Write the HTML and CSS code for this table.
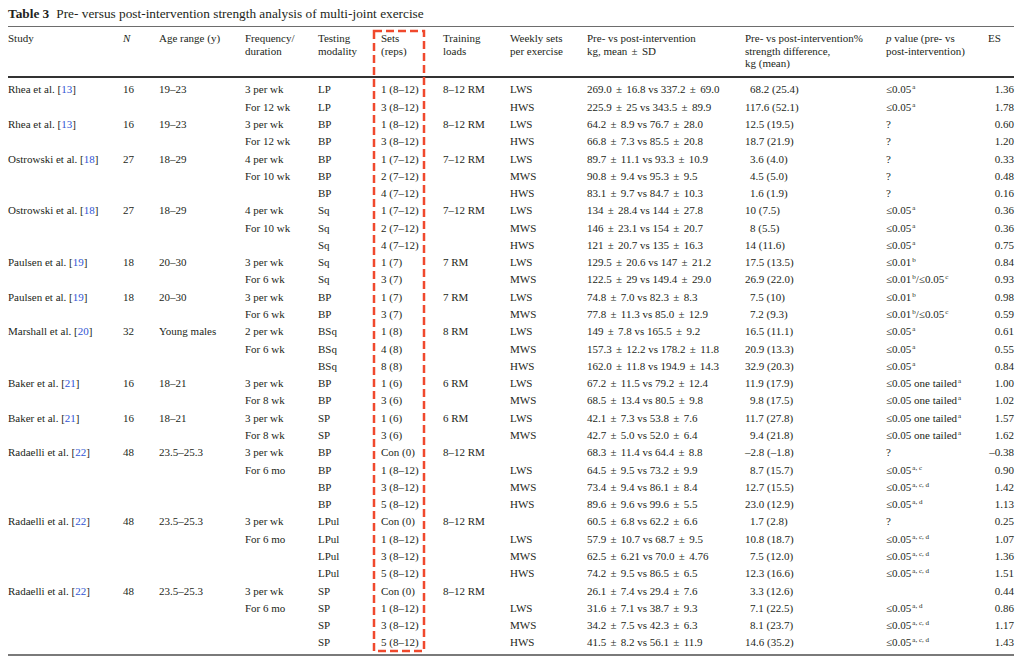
FILE: index.html
```html
<!DOCTYPE html>
<html lang="en">
<head>
<meta charset="utf-8">
<title>Table 3</title>
<link rel="stylesheet" href="styles.css">
</head>
<body>
<div class="page">
  <div class="caption"><b>Table 3</b><span class="ctext">Pre- versus post-intervention strength analysis of multi-joint exercise</span></div>
  <div class="wrap">
    <table class="data">
      <colgroup>
        <col class="c-study"><col class="c-n"><col class="c-age"><col class="c-freq"><col class="c-mod"><col class="c-sets"><col class="c-load"><col class="c-week"><col class="c-pp"><col class="c-pct"><col class="c-p"><col class="c-es">
      </colgroup>
      <thead>
        <tr>
          <th>Study</th>
          <th><i>N</i></th>
          <th>Age range (y)</th>
          <th>Frequency/<br>duration</th>
          <th>Testing<br>modality</th>
          <th class="sets">Sets<br>(reps)</th>
          <th>Training<br>loads</th>
          <th>Weekly sets<br>per exercise</th>
          <th>Pre- vs post-intervention<br>kg, mean <span class="pm">±</span> SD</th>
          <th>Pre- vs post-intervention%<br>strength difference,<br>kg (mean)</th>
          <th><i>p</i> value (pre- vs<br>post-intervention)</th>
          <th>ES</th>
        </tr>
      </thead>
      <tbody>
        <tr><td>Rhea et al. [<a>13</a>]</td><td>16</td><td>19–23</td><td>3 per wk</td><td>LP</td><td class="sets">1 (8–12)</td><td>8–12 RM</td><td>LWS</td><td>269.0 <span class="pm">±</span> 16.8 vs 337.2 <span class="pm">±</span> 69.0</td><td><span class="ind">68.2 (25.4)</span></td><td>≤0.05<sup>a</sup></td><td class="es">1.36</td></tr>
        <tr><td></td><td></td><td></td><td>For 12 wk</td><td>LP</td><td class="sets">3 (8–12)</td><td></td><td>HWS</td><td>225.9 <span class="pm">±</span> 25 vs 343.5 <span class="pm">±</span> 89.9</td><td>117.6 (52.1)</td><td>≤0.05<sup>a</sup></td><td class="es">1.78</td></tr>
        <tr><td>Rhea et al. [<a>13</a>]</td><td>16</td><td>19–23</td><td>3 per wk</td><td>BP</td><td class="sets">1 (8–12)</td><td>8–12 RM</td><td>LWS</td><td>64.2 <span class="pm">±</span> 8.9 vs 76.7 <span class="pm">±</span> 28.0</td><td>12.5 (19.5)</td><td>?</td><td class="es">0.60</td></tr>
        <tr><td></td><td></td><td></td><td>For 12 wk</td><td>BP</td><td class="sets">3 (8–12)</td><td></td><td>HWS</td><td>66.8 <span class="pm">±</span> 7.3 vs 85.5 <span class="pm">±</span> 20.8</td><td>18.7 (21.9)</td><td>?</td><td class="es">1.20</td></tr>
        <tr><td>Ostrowski et al. [<a>18</a>]</td><td>27</td><td>18–29</td><td>4 per wk</td><td>BP</td><td class="sets">1 (7–12)</td><td>7–12 RM</td><td>LWS</td><td>89.7 <span class="pm">±</span> 11.1 vs 93.3 <span class="pm">±</span> 10.9</td><td><span class="ind">3.6 (4.0)</span></td><td>?</td><td class="es">0.33</td></tr>
        <tr><td></td><td></td><td></td><td>For 10 wk</td><td>BP</td><td class="sets">2 (7–12)</td><td></td><td>MWS</td><td>90.8 <span class="pm">±</span> 9.4 vs 95.3 <span class="pm">±</span> 9.5</td><td><span class="ind">4.5 (5.0)</span></td><td>?</td><td class="es">0.48</td></tr>
        <tr><td></td><td></td><td></td><td></td><td>BP</td><td class="sets">4 (7–12)</td><td></td><td>HWS</td><td>83.1 <span class="pm">±</span> 9.7 vs 84.7 <span class="pm">±</span> 10.3</td><td><span class="ind">1.6 (1.9)</span></td><td>?</td><td class="es">0.16</td></tr>
        <tr><td>Ostrowski et al. [<a>18</a>]</td><td>27</td><td>18–29</td><td>4 per wk</td><td>Sq</td><td class="sets">1 (7–12)</td><td>7–12 RM</td><td>LWS</td><td>134 <span class="pm">±</span> 28.4 vs 144 <span class="pm">±</span> 27.8</td><td>10 (7.5)</td><td>≤0.05<sup>a</sup></td><td class="es">0.36</td></tr>
        <tr><td></td><td></td><td></td><td>For 10 wk</td><td>Sq</td><td class="sets">2 (7–12)</td><td></td><td>MWS</td><td>146 <span class="pm">±</span> 23.1 vs 154 <span class="pm">±</span> 20.7</td><td><span class="ind">8 (5.5)</span></td><td>≤0.05<sup>a</sup></td><td class="es">0.36</td></tr>
        <tr><td></td><td></td><td></td><td></td><td>Sq</td><td class="sets">4 (7–12)</td><td></td><td>HWS</td><td>121 <span class="pm">±</span> 20.7 vs 135 <span class="pm">±</span> 16.3</td><td>14 (11.6)</td><td>≤0.05<sup>a</sup></td><td class="es">0.75</td></tr>
        <tr><td>Paulsen et al. [<a>19</a>]</td><td>18</td><td>20–30</td><td>3 per wk</td><td>Sq</td><td class="sets">1 (7)</td><td>7 RM</td><td>LWS</td><td>129.5 <span class="pm">±</span> 20.6 vs 147 <span class="pm">±</span> 21.2</td><td>17.5 (13.5)</td><td>≤0.01<sup>b</sup></td><td class="es">0.84</td></tr>
        <tr><td></td><td></td><td></td><td>For 6 wk</td><td>Sq</td><td class="sets">3 (7)</td><td></td><td>MWS</td><td>122.5 <span class="pm">±</span> 29 vs 149.4 <span class="pm">±</span> 29.0</td><td>26.9 (22.0)</td><td>≤0.01<sup>b</sup>/≤0.05<sup>c</sup></td><td class="es">0.93</td></tr>
        <tr><td>Paulsen et al. [<a>19</a>]</td><td>18</td><td>20–30</td><td>3 per wk</td><td>BP</td><td class="sets">1 (7)</td><td>7 RM</td><td>LWS</td><td>74.8 <span class="pm">±</span> 7.0 vs 82.3 <span class="pm">±</span> 8.3</td><td><span class="ind">7.5 (10)</span></td><td>≤0.01<sup>b</sup></td><td class="es">0.98</td></tr>
        <tr><td></td><td></td><td></td><td>For 6 wk</td><td>BP</td><td class="sets">3 (7)</td><td></td><td>MWS</td><td>77.8 <span class="pm">±</span> 11.3 vs 85.0 <span class="pm">±</span> 12.9</td><td><span class="ind">7.2 (9.3)</span></td><td>≤0.01<sup>b</sup>/≤0.05<sup>c</sup></td><td class="es">0.59</td></tr>
        <tr><td>Marshall et al. [<a>20</a>]</td><td>32</td><td>Young males</td><td>2 per wk</td><td>BSq</td><td class="sets">1 (8)</td><td>8 RM</td><td>LWS</td><td>149 <span class="pm">±</span> 7.8 vs 165.5 <span class="pm">±</span> 9.2</td><td>16.5 (11.1)</td><td>≤0.05<sup>a</sup></td><td class="es">0.61</td></tr>
        <tr><td></td><td></td><td></td><td>For 6 wk</td><td>BSq</td><td class="sets">4 (8)</td><td></td><td>MWS</td><td>157.3 <span class="pm">±</span> 12.2 vs 178.2 <span class="pm">±</span> 11.8</td><td>20.9 (13.3)</td><td>≤0.05<sup>a</sup></td><td class="es">0.55</td></tr>
        <tr><td></td><td></td><td></td><td></td><td>BSq</td><td class="sets">8 (8)</td><td></td><td>HWS</td><td>162.0 <span class="pm">±</span> 11.8 vs 194.9 <span class="pm">±</span> 14.3</td><td>32.9 (20.3)</td><td>≤0.05<sup>a</sup></td><td class="es">0.84</td></tr>
        <tr><td>Baker et al. [<a>21</a>]</td><td>16</td><td>18–21</td><td>3 per wk</td><td>BP</td><td class="sets">1 (6)</td><td>6 RM</td><td>LWS</td><td>67.2 <span class="pm">±</span> 11.5 vs 79.2 <span class="pm">±</span> 12.4</td><td>11.9 (17.9)</td><td>≤0.05 one tailed<sup>a</sup></td><td class="es">1.00</td></tr>
        <tr><td></td><td></td><td></td><td>For 8 wk</td><td>BP</td><td class="sets">3 (6)</td><td></td><td>MWS</td><td>68.5 <span class="pm">±</span> 13.4 vs 80.5 <span class="pm">±</span> 9.8</td><td><span class="ind">9.8 (17.5)</span></td><td>≤0.05 one tailed<sup>a</sup></td><td class="es">1.02</td></tr>
        <tr><td>Baker et al. [<a>21</a>]</td><td>16</td><td>18–21</td><td>3 per wk</td><td>SP</td><td class="sets">1 (6)</td><td>6 RM</td><td>LWS</td><td>42.1 <span class="pm">±</span> 7.3 vs 53.8 <span class="pm">±</span> 7.6</td><td>11.7 (27.8)</td><td>≤0.05 one tailed<sup>a</sup></td><td class="es">1.57</td></tr>
        <tr><td></td><td></td><td></td><td>For 8 wk</td><td>SP</td><td class="sets">3 (6)</td><td></td><td>MWS</td><td>42.7 <span class="pm">±</span> 5.0 vs 52.0 <span class="pm">±</span> 6.4</td><td><span class="ind">9.4 (21.8)</span></td><td>≤0.05 one tailed<sup>a</sup></td><td class="es">1.62</td></tr>
        <tr><td>Radaelli et al. [<a>22</a>]</td><td>48</td><td>23.5–25.3</td><td>3 per wk</td><td>BP</td><td class="sets">Con (0)</td><td>8–12 RM</td><td></td><td>68.3 <span class="pm">±</span> 11.4 vs 64.4 <span class="pm">±</span> 8.8</td><td>–2.8 (–1.8)</td><td>?</td><td class="es">–0.38</td></tr>
        <tr><td></td><td></td><td></td><td>For 6 mo</td><td>BP</td><td class="sets">1 (8–12)</td><td></td><td>LWS</td><td>64.5 <span class="pm">±</span> 9.5 vs 73.2 <span class="pm">±</span> 9.9</td><td><span class="ind">8.7 (15.7)</span></td><td>≤0.05<sup>a, c</sup></td><td class="es">0.90</td></tr>
        <tr><td></td><td></td><td></td><td></td><td>BP</td><td class="sets">3 (8–12)</td><td></td><td>MWS</td><td>73.4 <span class="pm">±</span> 9.4 vs 86.1 <span class="pm">±</span> 8.4</td><td>12.7 (15.5)</td><td>≤0.05<sup>a, c, d</sup></td><td class="es">1.42</td></tr>
        <tr><td></td><td></td><td></td><td></td><td>BP</td><td class="sets">5 (8–12)</td><td></td><td>HWS</td><td>89.6 <span class="pm">±</span> 9.6 vs 99.6 <span class="pm">±</span> 5.5</td><td>23.0 (12.9)</td><td>≤0.05<sup>a, d</sup></td><td class="es">1.13</td></tr>
        <tr><td>Radaelli et al. [<a>22</a>]</td><td>48</td><td>23.5–25.3</td><td>3 per wk</td><td>LPul</td><td class="sets">Con (0)</td><td>8–12 RM</td><td></td><td>60.5 <span class="pm">±</span> 6.8 vs 62.2 <span class="pm">±</span> 6.6</td><td><span class="ind">1.7 (2.8)</span></td><td>?</td><td class="es">0.25</td></tr>
        <tr><td></td><td></td><td></td><td>For 6 mo</td><td>LPul</td><td class="sets">1 (8–12)</td><td></td><td>LWS</td><td>57.9 <span class="pm">±</span> 10.7 vs 68.7 <span class="pm">±</span> 9.5</td><td>10.8 (18.7)</td><td>≤0.05<sup>a, c, d</sup></td><td class="es">1.07</td></tr>
        <tr><td></td><td></td><td></td><td></td><td>LPul</td><td class="sets">3 (8–12)</td><td></td><td>MWS</td><td>62.5 <span class="pm">±</span> 6.21 vs 70.0 <span class="pm">±</span> 4.76</td><td><span class="ind">7.5 (12.0)</span></td><td>≤0.05<sup>a, c, d</sup></td><td class="es">1.36</td></tr>
        <tr><td></td><td></td><td></td><td></td><td>LPul</td><td class="sets">5 (8–12)</td><td></td><td>HWS</td><td>74.2 <span class="pm">±</span> 9.5 vs 86.5 <span class="pm">±</span> 6.5</td><td>12.3 (16.6)</td><td>≤0.05<sup>a, c, d</sup></td><td class="es">1.51</td></tr>
        <tr><td>Radaelli et al. [<a>22</a>]</td><td>48</td><td>23.5–25.3</td><td>3 per wk</td><td>SP</td><td class="sets">Con (0)</td><td>8–12 RM</td><td></td><td>26.1 <span class="pm">±</span> 7.4 vs 29.4 <span class="pm">±</span> 7.6</td><td><span class="ind">3.3 (12.6)</span></td><td></td><td class="es">0.44</td></tr>
        <tr><td></td><td></td><td></td><td>For 6 mo</td><td>SP</td><td class="sets">1 (8–12)</td><td></td><td>LWS</td><td>31.6 <span class="pm">±</span> 7.1 vs 38.7 <span class="pm">±</span> 9.3</td><td><span class="ind">7.1 (22.5)</span></td><td>≤0.05<sup>a, d</sup></td><td class="es">0.86</td></tr>
        <tr><td></td><td></td><td></td><td></td><td>SP</td><td class="sets">3 (8–12)</td><td></td><td>MWS</td><td>34.2 <span class="pm">±</span> 7.5 vs 42.3 <span class="pm">±</span> 6.3</td><td><span class="ind">8.1 (23.7)</span></td><td>≤0.05<sup>a, c, d</sup></td><td class="es">1.17</td></tr>
        <tr><td></td><td></td><td></td><td></td><td>SP</td><td class="sets">5 (8–12)</td><td></td><td>HWS</td><td>41.5 <span class="pm">±</span> 8.2 vs 56.1 <span class="pm">±</span> 11.9</td><td>14.6 (35.2)</td><td>≤0.05<sup>a, c, d</sup></td><td class="es">1.43</td></tr>
      </tbody>
    </table>
    <svg class="highlight" width="54" height="624" viewBox="0 0 54 624" aria-hidden="true">
      <rect x="2" y="2" width="50" height="620" fill="none" stroke="#f0492d" stroke-width="2.5" stroke-dasharray="8 4"/>
    </svg>
  </div>
</div>
</body>
</html>
```

FILE: styles.css
```css
html, body {
  margin: 0;
  padding: 0;
  background: #ffffff;
}

body {
  font-family: "Liberation Serif", "Times New Roman", serif;
  color: #231f20;
}

.page {
  padding: 6px 10px 0 8px;
}

.caption {
  font-size: 13.3px;
  line-height: 16px;
  height: 16px;
  margin-bottom: 4px;
  white-space: nowrap;
}

.caption b {
  font-weight: bold;
}

.ctext {
  margin-left: 7px;
}

.wrap {
  position: relative;
  width: 1006px;
}

.data {
  width: 1006px;
  table-layout: fixed;
  border-collapse: separate;
  border-spacing: 0;
  border-top: 1px solid #6d6d6d;
  border-bottom: 2px solid #7a7a7a;
  font-size: 11px;
}

.c-study { width: 115px; }
.c-n { width: 36px; }
.c-age { width: 86px; }
.c-freq { width: 73px; }
.c-mod { width: 63px; }
.c-sets { width: 62px; }
.c-load { width: 67px; }
.c-week { width: 77px; }
.c-pp { width: 158px; }
.c-pct { width: 141px; }
.c-p { width: 102px; }
.c-es { width: 26px; }

.data th {
  font-weight: normal;
  text-align: left;
  vertical-align: top;
  line-height: 12.5px;
  padding: 5px 0 6px 0;
  border-bottom: 2px solid #333333;
  white-space: nowrap;
}

.data td {
  padding: 0;
  line-height: 17.28px;
  height: 17.28px;
  white-space: nowrap;
  vertical-align: middle;
}

.data tbody tr:first-child td {
  padding-top: 3.9px;
}

.data tbody tr:last-child td {
  padding-bottom: 2.5px;
}

.data td.es {
  text-align: right;
}

.data a {
  color: #2f55d4;
}

.pm {
  margin: 0 1.5px;
}

.ind {
  padding-left: 5px;
}

.data sup {
  font-size: 7px;
  line-height: 0;
  vertical-align: 4px;
  margin-left: 1px;
}

.highlight {
  position: absolute;
  left: 364px;
  top: 3px;
}
```
